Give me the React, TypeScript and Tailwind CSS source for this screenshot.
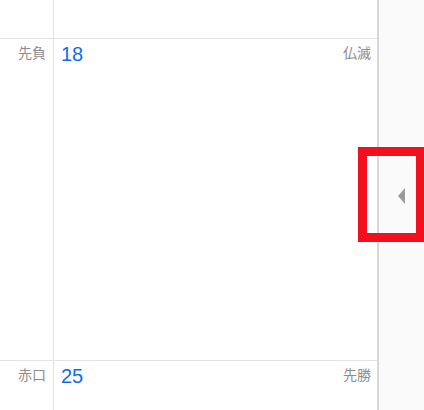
const weeks = [
  { rokuyo: "", day: "", right: "", height: "h-[38px]" },
  { rokuyo: "先負", day: "18", right: "仏滅", height: "h-[322px]" },
  { rokuyo: "赤口", day: "25", right: "先勝", height: "h-[60px]" },
];

const font = { fontFamily: '"Liberation Sans", "Noto Sans CJK JP", sans-serif' };

export default function App() {
  return (
    <div className="flex h-[410px] w-[424px] overflow-hidden bg-white" style={font}>
      <div className="flex w-[377px] flex-col">
        {weeks.map((w, i) => (
          <div
            key={i}
            className={`flex shrink-0 ${w.height} ${i > 0 ? "border-t border-[#e3e3e3]" : ""}`}
          >
            <div className="w-[54px] shrink-0 border-r border-[#e3e3e3] pr-[7px] pt-[6px] text-right text-[14px] leading-[17px] text-[#8c8c8c]">
              {w.rokuyo}
            </div>
            <div className="flex flex-1 items-start justify-between pl-[7px] pr-[6px] pt-[4px]">
              <span className="text-[20px] leading-[22px] text-[#0f6cf2]">{w.day}</span>
              <span className="pt-[2px] text-[14px] leading-[17px] text-[#8c8c8c]">{w.right}</span>
            </div>
          </div>
        ))}
      </div>
      <div className="relative flex flex-1 items-center justify-center border-l-2 border-[#d8d8d8] bg-[#fafafa]">
        <svg width="8" height="16" viewBox="0 0 8 16" className="ml-[0px] mt-[-19px]">
          <path d="M7 0 L0 8 L7 16 Z" fill="#9a9a9a" />
        </svg>
        <div className="absolute left-[-21px] top-[147px] h-[95px] w-[67px] border-[9px] border-[#f2101e]" />
      </div>
    </div>
  );
}
